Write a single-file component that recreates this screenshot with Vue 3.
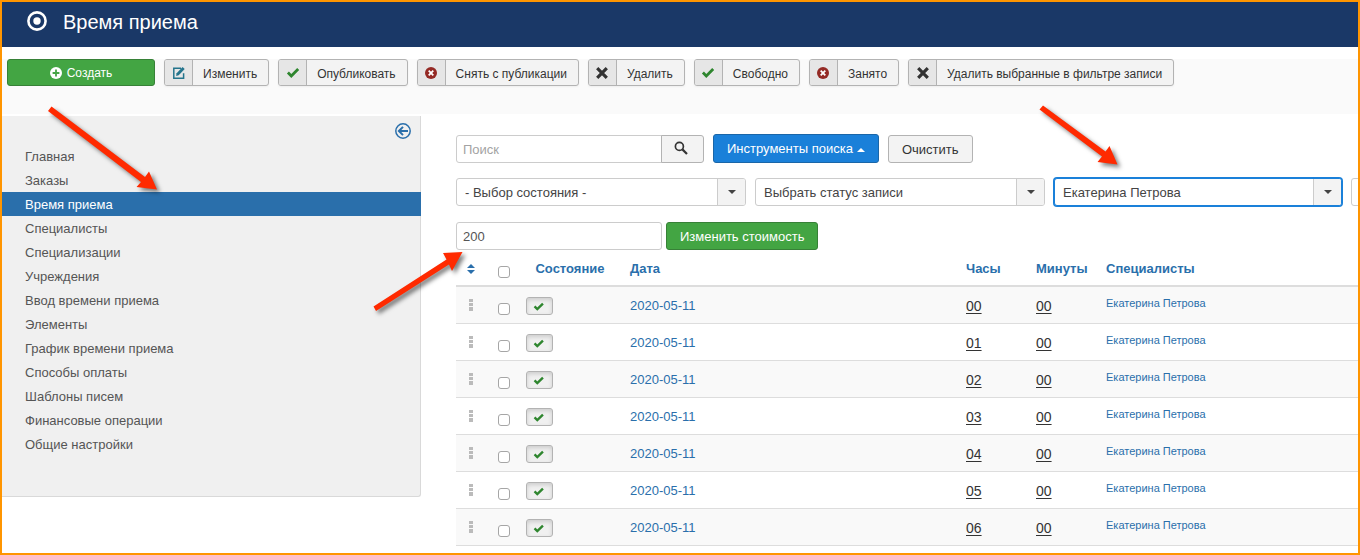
<template>
  <div class="page">
    <!-- header -->
    <header class="header">
      <svg class="logo" viewBox="0 0 20 20" aria-hidden="true">
        <circle cx="10" cy="10" r="8.6" fill="none" stroke="#fff" stroke-width="2.6" />
        <circle cx="10" cy="10" r="3.7" fill="#fff" />
      </svg>
      <h1 class="title">Время приема</h1>
    </header>

    <!-- toolbar -->
    <div class="toolbar">
      <button type="button" class="btn-new">
        <svg class="icon-new" viewBox="0 0 12 12" aria-hidden="true">
          <circle cx="6" cy="6" r="6" fill="#fff" />
          <path d="M6 2.6v6.8M2.6 6h6.8" stroke="#46a546" stroke-width="1.8" />
        </svg>
        <span>Создать</span>
      </button>
      <button v-for="b in buttons" :key="b.label" type="button" class="btn-tool">
        <span class="btn-icon">
          <svg v-if="b.icon === 'edit'" viewBox="0 0 14 14" aria-hidden="true">
            <path d="M9 2.2H1.8v10h9.8V7.2" fill="none" stroke="#24748c" stroke-width="1.5" />
            <path d="M4.6 7.2l6-6.1 2.1 2-6 6.2-2.6.6z" fill="#24748c" />
          </svg>
          <svg v-else-if="b.icon === 'check'" viewBox="0 0 14 14" aria-hidden="true">
            <path d="M1.9 6.6l3.4 3.5 6.9-7" fill="none" stroke="#2f862f" stroke-width="2.8" />
          </svg>
          <svg v-else-if="b.icon === 'stop'" viewBox="0 0 14 14" aria-hidden="true">
            <circle cx="7" cy="7" r="6" fill="#942a25" />
            <path d="M4.7 4.7l4.6 4.6M9.3 4.7L4.7 9.3" stroke="#fff" stroke-width="1.8" />
          </svg>
          <svg v-else viewBox="0 0 14 14" aria-hidden="true">
            <path d="M2.2 2.2l9.6 9.6M11.8 2.2l-9.6 9.6" stroke="#333" stroke-width="3.2" />
          </svg>
        </span>
        <span class="btn-label">{{ b.label }}</span>
      </button>
    </div>

    <div class="content">
      <!-- sidebar -->
      <nav class="sidebar">
        <button type="button" class="collapse" aria-label="Скрыть меню">
          <svg viewBox="0 0 16 16" aria-hidden="true">
            <circle cx="8" cy="8" r="7.2" fill="none" stroke="#2a6fab" stroke-width="1.5" />
            <path d="M13 8H4.4M8 3.9L3.9 8 8 12.1" fill="none" stroke="#2a6fab" stroke-width="2" />
          </svg>
        </button>
        <ul>
          <li v-for="item in menu" :key="item">
            <a href="#" :class="{ active: item === current }">{{ item }}</a>
          </li>
        </ul>
      </nav>

      <!-- main -->
      <main class="main">
        <div class="row">
          <div class="search">
            <input v-model="search" type="text" placeholder="Поиск" aria-label="Поиск" />
            <button type="button" aria-label="Искать">
              <svg viewBox="0 0 14 14" aria-hidden="true">
                <circle cx="5.4" cy="5.4" r="4" fill="none" stroke="#333" stroke-width="1.7" />
                <path d="M8.4 8.4l4.6 4.6" stroke="#333" stroke-width="2.2" />
              </svg>
            </button>
          </div>
          <button type="button" class="btn btn-primary">
            Инструменты поиска<span class="caret-up"></span>
          </button>
          <button type="button" class="btn">Очистить</button>
        </div>

        <div class="row filters">
          <div v-for="f in filters" :key="f.name" class="select" :class="{ focused: f.focused }">
            <select :aria-label="f.name">
              <option>{{ f.value }}</option>
            </select>
            <span class="arrow"></span>
          </div>
        </div>

        <div class="row price">
          <input v-model="price" type="text" aria-label="Стоимость" />
          <button type="button" class="btn btn-success">Изменить стоимость</button>
        </div>

        <table class="table">
          <colgroup>
            <col class="c-sort" />
            <col class="c-check" />
            <col class="c-state" />
            <col class="c-date" />
            <col class="c-time" />
            <col class="c-time" />
            <col />
          </colgroup>
          <thead>
            <tr>
              <th class="center">
                <a href="#" aria-label="Порядок">
                  <svg class="sort" viewBox="0 0 8 10" aria-hidden="true">
                    <path d="M0 4l4-4 4 4zM0 6h8l-4 4z" fill="#2a6fab" />
                  </svg>
                </a>
              </th>
              <th class="check"><input type="checkbox" aria-label="Выбрать все" /></th>
              <th class="center"><a href="#">Состояние</a></th>
              <th><a href="#">Дата</a></th>
              <th><a href="#">Часы</a></th>
              <th><a href="#">Минуты</a></th>
              <th><a href="#">Специалисты</a></th>
            </tr>
          </thead>
          <tbody>
            <tr v-for="hour in hours" :key="hour">
              <td class="center">
                <svg class="handle" viewBox="0 0 4 12" aria-hidden="true">
                  <path d="M0 0h4v3H0zM0 4h4v3H0zM0 8h4v4H0z" fill="#bbb" />
                </svg>
              </td>
              <td class="check"><input type="checkbox" :aria-label="'Выбрать ' + hour" /></td>
              <td>
                <button type="button" class="state" aria-label="Опубликовано">
                  <svg viewBox="0 0 14 14" aria-hidden="true">
                    <path d="M1.8 7.4l3.2 3.1 6.6-6.4" fill="none" stroke="#2f862f" stroke-width="2.8" />
                  </svg>
                </button>
              </td>
              <td><a href="#">2020-05-11</a></td>
              <td class="time"><span>{{ hour }}</span></td>
              <td class="time"><span>00</span></td>
              <td class="person"><a href="#">Екатерина Петрова</a></td>
            </tr>
          </tbody>
        </table>
      </main>
    </div>

    <!-- red pointers over the page -->
    <svg class="pointers" viewBox="0 0 1360 555" aria-hidden="true">
      <path d="M51.5 106.500L145 177 149 171.500 157 189.500 136.500 187 141 182 48 111z" />
      <path d="M1043 105.500L1105.500 151.500 1109.500 146 1117.500 164.500 1097.500 162 1102 156.500 1039.500 109.500z" />
      <path d="M373.500 306.500L446.500 259.500 443 253 462.500 252 452 271 449 264.500 376 311z" />
    </svg>
  </div>
</template>

<script setup>
import { ref } from 'vue'

const buttons = [
  { icon: 'edit', label: 'Изменить' },
  { icon: 'check', label: 'Опубликовать' },
  { icon: 'stop', label: 'Снять с публикации' },
  { icon: 'delete', label: 'Удалить' },
  { icon: 'check', label: 'Свободно' },
  { icon: 'stop', label: 'Занято' },
  { icon: 'delete', label: 'Удалить выбранные в фильтре записи' }
]

const menu = [
  'Главная',
  'Заказы',
  'Время приема',
  'Специалисты',
  'Специализации',
  'Учреждения',
  'Ввод времени приема',
  'Элементы',
  'График времени приема',
  'Способы оплаты',
  'Шаблоны писем',
  'Финансовые операции',
  'Общие настройки'
]
const current = 'Время приема'

const filters = [
  { name: 'Состояние', value: '- Выбор состояния -' },
  { name: 'Статус', value: 'Выбрать статус записи' },
  { name: 'Специалист', value: 'Екатерина Петрова', focused: true },
  { name: 'Дата', value: '' }
]

const hours = ['00', '01', '02', '03', '04', '05', '06']

const search = ref('')
const price = ref('200')
</script>

<style>
body {
  margin: 0;
  background: #fff;
}
</style>

<style scoped>
.page {
  position: relative;
  min-height: 100vh;
  box-sizing: border-box;
  border: 2px solid #ff9500;
  overflow: hidden;
  font-family: "Liberation Sans", Arial, sans-serif;
  font-size: 13px;
  line-height: 18px;
  color: #333;
}
.page *, .page *::before { box-sizing: border-box; }
button, input, select {
  font: inherit;
  color: inherit;
  margin: 0;
}
button { cursor: pointer; }
a { color: #2a6fab; text-decoration: none; }
svg { display: block; }

/* header */
.header {
  display: flex;
  align-items: center;
  gap: 16px;
  height: 45px;
  padding: 0 25px 5px;
  background: #1a3867;
}
.logo { width: 20px; height: 20px; margin-top: -3px; }
.title {
  margin: 0;
  font-size: 20px;
  font-weight: 400;
  line-height: 24px;
  color: #fff;
}

/* toolbar */
.toolbar {
  display: flex;
  align-items: flex-start;
  gap: 9px;
  min-height: 55px;
  margin: 12px 0 2px;
  padding: 0 5px;
  background: #fafafa;
  font-size: 12px;
}
.btn-new {
  display: flex;
  align-items: center;
  justify-content: center;
  gap: 5px;
  width: 148px;
  height: 27px;
  padding: 0;
  border: 1px solid #378137;
  border-radius: 3px;
  background: #43a543;
  color: #fff;
}
.btn-new span { line-height: 27px; padding-top: 2px; }
.icon-new { width: 12px; height: 12px; }
.btn-tool {
  display: flex;
  height: 27px;
  padding: 0;
  border: 1px solid #b3b3b3;
  border-radius: 3px;
  background: #f3f3f3;
  box-shadow: 0 1px 2px rgba(0, 0, 0, .05);
  overflow: hidden;
  white-space: nowrap;
}
.btn-icon {
  display: flex;
  align-items: center;
  justify-content: center;
  width: 28px;
  height: 25px;
  border-right: 1px solid #b3b3b3;
  background: #e6e6e6;
}
.btn-icon svg { width: 14px; height: 14px; }
.btn-label { padding: 1px 11px 0 10px; line-height: 27px; }

/* sidebar */
.content { display: flex; align-items: flex-start; }
.sidebar {
  position: relative;
  flex: 0 0 419px;
  padding: 28px 0 40px;
  border-right: 1px solid #d9d9d9;
  border-bottom: 1px solid #d9d9d9;
  border-radius: 0 0 3px 0;
  background: #f0f0f0;
}
.sidebar ul { margin: 0; padding: 0; list-style: none; }
.sidebar li a {
  display: block;
  height: 24px;
  margin-right: -1px;
  padding: 0 23px;
  line-height: 26px;
  color: #555;
}
.sidebar li a.active { background: #2a6fab; color: #fff; }
.collapse {
  position: absolute;
  top: 7px;
  right: 9px;
  padding: 0;
  border: 0;
  background: none;
}
.collapse svg { width: 16px; height: 16px; }

/* main */
.main { flex: 1; min-width: 0; padding: 18px 0 0 35px; }
.row {
  display: flex;
  align-items: flex-end;
  gap: 9px;
}
.btn {
  height: 28px;
  padding: 1px 13px 0;
  border: 1px solid #b3b3b3;
  border-radius: 3px;
  background: #f3f3f3;
  white-space: nowrap;
}
.btn-primary {
  height: 29px;
  border-color: #1a66a8;
  background: #1a80d9;
  color: #fff;
}
.btn-success {
  border-color: #378137;
  background: #43a543;
  color: #fff;
}
.caret-up {
  display: inline-block;
  margin-left: 4px;
  border: 4px solid transparent;
  border-top: 0;
  border-bottom-color: #fff;
  vertical-align: middle;
}
.search { display: flex; }
.search input, .price input {
  width: 206px;
  height: 28px;
  padding: 0 6px;
  border: 1px solid #ccc;
  border-radius: 3px;
  background: #fff;
  color: #555;
  outline: none;
}
.search input { border-radius: 3px 0 0 3px; }
.search input::placeholder { color: #a3a3a3; opacity: 1; }
.search button {
  display: flex;
  align-items: center;
  justify-content: center;
  width: 43px;
  height: 28px;
  margin-left: -1px;
  padding: 0 4px 2px 0;
  border: 1px solid #b3b3b3;
  border-radius: 0 3px 3px 0;
  background: #f3f3f3;
}
.search svg { width: 14px; height: 14px; }

.filters { margin-top: 15px; }
.select {
  position: relative;
  flex: 0 0 290px;
  height: 28px;
}
.select select {
  appearance: none;
  width: 100%;
  height: 100%;
  padding: 1px 36px 0 8px;
  border: 1px solid #ccc;
  border-radius: 3px;
  background: #fff;
  color: #444;
  outline: none;
}
.arrow {
  position: absolute;
  top: 1px;
  right: 1px;
  bottom: 1px;
  display: flex;
  align-items: center;
  justify-content: center;
  width: 28px;
  border-left: 1px solid #ccc;
  border-radius: 0 2px 2px 0;
  background: #f3f3f3;
  pointer-events: none;
}
.arrow::before {
  content: "";
  border: 4px solid transparent;
  border-top-color: #444;
  border-bottom: 0;
}
.select.focused { flex-basis: 288px; }
.focused select {
  border-color: #1a80d9;
  box-shadow: 0 0 0 1px #1a80d9;
}

.price { gap: 4px; margin-top: 16px; }

/* table */
.table {
  width: 100%;
  table-layout: fixed;
  border-collapse: separate;
  border-spacing: 0;
}
.c-sort { width: 30px; }
.c-check { width: 32px; }
.c-state { width: 104px; }
.c-date { width: 336px; }
.c-time { width: 70px; }
th, td {
  height: 37px;
  padding: 2px 8px 0;
  border-bottom: 1px solid #ddd;
  text-align: left;
  vertical-align: middle;
}
th { border-bottom-width: 2px; }
tbody tr:nth-child(odd) td { background: #f9f9f9; }
.table .center { padding: 2px 0 0; text-align: center; }
.sort { width: 8px; height: 10px; margin: 0 auto; }
.handle { width: 4px; height: 12px; margin: -2px auto 0; }
.table .check { padding: 8px 0 0 12px; }
.check input {
  appearance: none;
  display: block;
  width: 12px;
  height: 12px;
  border: 1px solid #a6a6a6;
  border-radius: 3px;
  background: #fff;
}
.state {
  display: flex;
  align-items: center;
  justify-content: center;
  width: 27px;
  height: 18px;
  padding: 0 2px 0 0;
  border: 1px solid #b3b3b3;
  border-radius: 3px;
  background: #f0f0f0;
  box-shadow: inset 0 2px 4px rgba(0, 0, 0, .15);
}
.state svg { width: 12px; height: 12px; }
.time { font-size: 14px; }
.time span { text-decoration: underline; text-underline-offset: 2px; }
.person { font-size: 11px; }
.table .person { padding: 0 8px 4px; }

/* pointers */
.pointers {
  position: absolute;
  top: -2px;
  left: -2px;
  width: 1360px;
  height: 555px;
  fill: #ff2a00;
  filter: drop-shadow(3px 3px 2px rgba(0, 0, 0, .5));
  pointer-events: none;
}
</style>
